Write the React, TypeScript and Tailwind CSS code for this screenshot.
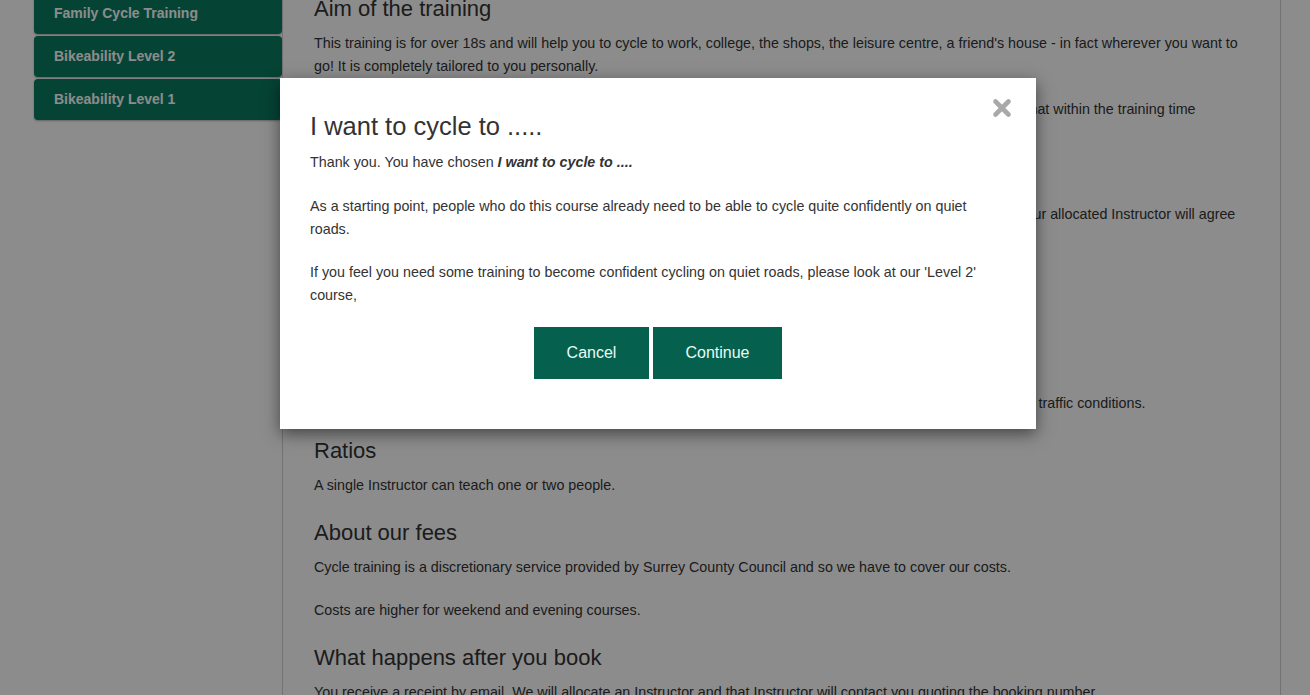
import React from 'react';

const sideItems = ['Family Cycle Training', 'Bikeability Level 2', 'Bikeability Level 1'];

function Heading({ children }: { children: React.ReactNode }) {
  return <h3 className="text-[22px] leading-[26px] mt-[23px] mb-[10px] first:mt-0 text-[#333]">{children}</h3>;
}

function Para({ children, className = 'mb-[20px]' }: { children: React.ReactNode; className?: string }) {
  return <p className={`text-[14.3px] leading-[23px] text-[#333] ${className}`}>{children}</p>;
}

function CloseIcon() {
  return (
    <svg width="20" height="20" viewBox="0 0 20 20">
      <path d="M3.5 3.5 L16.5 16.5 M16.5 3.5 L3.5 16.5" stroke="#a9a9a9" strokeWidth="4.6" strokeLinecap="round" />
    </svg>
  );
}

export default function App() {
  return (
    <div className="relative h-[695px] overflow-hidden bg-white" style={{ fontFamily: '"Liberation Sans", Arial, sans-serif' }}>
      {/* Page behind the dialog, scrolled a little */}
      <div className="flex -mt-[8px]">
        <div className="ml-[34px] mt-[1px] w-[248px] flex flex-col gap-[2px] shrink-0">
          {sideItems.map((item) => (
            <div
              key={item}
              className="h-[41px] flex items-center pl-[20px] rounded-[4px] bg-[#0a7a60] text-white text-[14px] font-bold shadow-[0_1px_2px_rgba(0,0,0,0.3)]"
            >
              {item}
            </div>
          ))}
        </div>

        <div className="w-[999px] shrink-0 border-x border-[#cfcfcf] px-[31px] pt-[4px] min-h-[760px]">
          <Heading>Aim of the training</Heading>
          <Para>
            This training is for over 18s and will help you to cycle to work, college, the shops, the leisure centre, a
            friend's house - in fact wherever you want to go! It is completely tailored to you personally.
          </Para>
          <Para>
            Your Instructor will help you to plan the routes you want to cycle and will make sure that you practise as much of that within the training time
            <br />
            as possible.
          </Para>
          <Heading>When and where</Heading>
          <Para>
            Training can begin from your home, your workplace, a quiet park or another venue to suit you. When you book, your allocated Instructor will agree
            <br />
            a start point, date and time with you.
          </Para>
          <Heading>What you will learn</Heading>
          <ul className="list-disc pl-[40px] mb-[15px] text-[14.3px] leading-[23px] text-[#333]">
            <li>Planning a safe and direct route</li>
            <li>Checking your bike is roadworthy</li>
            <li>Positioning, signalling and making decisions at junctions</li>
          </ul>
          <Para>
            Once you feel ready, you will practise riding on busier roads, through junctions and roundabouts, in a range of real traffic conditions.
          </Para>
          <Heading>Ratios</Heading>
          <Para>A single Instructor can teach one or two people.</Para>
          <Heading>About our fees</Heading>
          <Para>
            Cycle training is a discretionary service provided by Surrey County Council and so we have to cover our costs.
          </Para>
          <Para>Costs are higher for weekend and evening courses.</Para>
          <Heading>What happens after you book</Heading>
          <Para>
            You receive a receipt by email. We will allocate an Instructor and that Instructor will contact you quoting the booking number.
          </Para>
        </div>
      </div>

      {/* Backdrop */}
      <div className="absolute inset-0 bg-black/[0.45]" />

      {/* Dialog */}
      <div className="absolute left-[280px] top-[78px] w-[756px] bg-white pl-[30px] pr-[40px] pt-[35px] pb-[50px] shadow-[0_5px_15px_rgba(0,0,0,0.5)] text-[#333]">
        <button className="absolute top-[20px] right-[24px]">
          <CloseIcon />
        </button>
        <h2 className="text-[25.5px] leading-[26px] mb-[12px]">I want to cycle to .....</h2>
        <Para className="mb-[21px]">
          Thank you. You have chosen <b><i>I want to cycle to ....</i></b>
        </Para>
        <Para>
          As a starting point, people who do this course already need to be able to cycle quite confidently on quiet roads.
        </Para>
        <Para>
          If you feel you need some training to become confident cycling on quiet roads, please look at our 'Level 2' course,
        </Para>
        <div className="flex justify-center gap-[4px] pl-[10px]">
          <button className="w-[115px] h-[52px] bg-[#05614e] text-[#e8fbf5] text-[16px]">Cancel</button>
          <button className="w-[129px] h-[52px] bg-[#05614e] text-[#e8fbf5] text-[16px]">Continue</button>
        </div>
      </div>
    </div>
  );
}
